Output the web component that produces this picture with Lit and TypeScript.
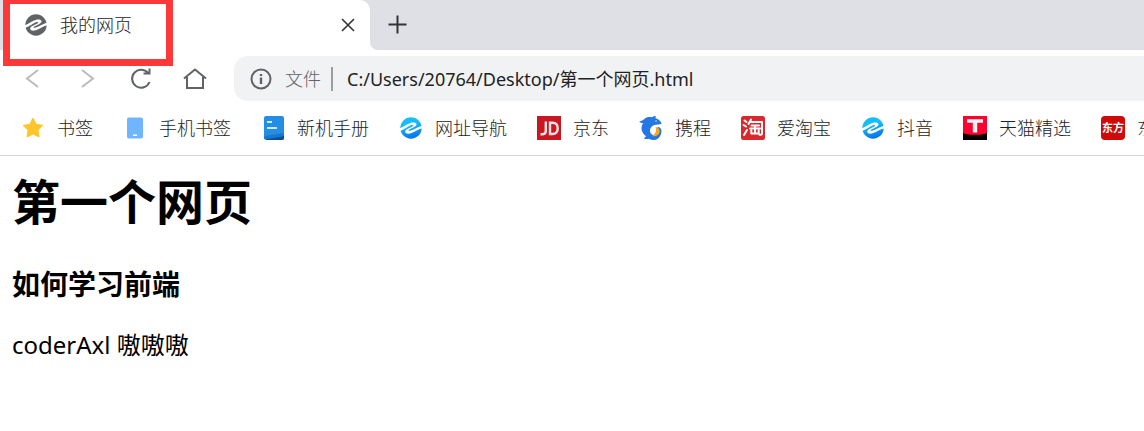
import { LitElement, html, css, svg } from "lit";
import { customElement, property, state } from "lit/decorators.js";

type IconName =
  | "star" | "phone" | "book" | "globe" | "jd" | "dolphin" | "tao" | "tmall" | "dongfang";

const swirl = (fill: string) => svg`
  <circle cx="12" cy="12" r="10.700" fill=${fill}/>
  <path fill="#fff" d="M0 12.400C3.800 11.700 7 8.300 11.500 7c3-.9 5.800-.4 6 1.300.1 1.200-.8 1.900-2.200 2.600l-5 2.500c-1.400.8-1.100 1.700.7 1.400 4-.7 7.500-4.400 13-5v2.400c-4.800.6-8 3.700-12.200 5-2.800.9-5.500.4-5.600-1.500-.1-1.300.8-2.100 2.200-2.800l5-2.500c1.400-.7 1-1.600-.7-1.300C8.700 9.900 6 14.200 0 14.900z"/>`;

const icons: Record<IconName, unknown> = {
  star: svg`<path fill="#ffc62b" stroke="#ffc62b" stroke-width="1.600" stroke-linejoin="round"
    d="M12 2.700l2.900 5.900 6.300.9-4.600 4.500 1.100 6.500-5.700-3-5.700 3 1.100-6.500L2.800 9.500l6.300-.9z"/>`,
  phone: svg`<rect x="4" y="1.500" width="16" height="21" rx="1.800" fill="#70b5ff"/>
    <rect x="10" y="18.500" width="4" height="1.500" fill="#fff"/>`,
  book: svg`<path fill="#0a4f98" d="M4 22l19-3v3.500q0 1.500-2 1.500H5z"/>
    <path fill="#248ee4" d="M5 0h16q2 0 2 2v16.500q0 1.500-2 1.700L3 23V2q0-2 2-2z"/>
    <path fill="#1778ce" d="M3 22q0-2 2-2.300L23 17v1.500q0 1.500-2 1.700L5 23.500q-2 0-2-1.500z"/>
    <path stroke="#c9eaff" stroke-width="2" d="M6 6h5M6 12h10"/>`,
  globe: svg`<defs><linearGradient id="sea" x1="0" y1="0" x2=".3" y2="1">
      <stop offset="0" stop-color="#13c4fa"/><stop offset=".45" stop-color="#16baf8"/><stop offset="1" stop-color="#0878ed"/>
    </linearGradient></defs>${swirl("url(#sea)")}`,
  jd: svg`<rect width="24" height="24" fill="#c91623"/>
    <path fill="none" stroke="#fbe3e4" stroke-width="2.400"
      d="M8.800 5.500v9.300q0 3.300-3 3.400H3.500M13 6.700h2.500c3.600 0 5.200 2.100 5.200 5.600s-1.600 5.700-5.200 5.700H13z"/>`,
  dolphin: svg`<path fill="#2577e3" d="M.3 5.300C3 5 4.300 3.800 6 2.500 8 1 10.500.8 13 1.300 14 .5 15.500 0 16.500 0c.5.600.2 1.300-.2 1.900 2.300.7 4.200 2 5.300 3.900.5.900 1 1.400 1 2-2.300 1.200-5 .5-7.300 1.300-2.700 1-4.300 3-4.300 5.400 0 3 2.300 4.900 5 4.800 2.300-.1 4-1.500 4.800-3.600l1.300.5C21.500 21 18.800 24 14.500 24c-1.700 0-3.300-.4-4.700-1.200-1.700.5-3.500.3-5.100-.6 1.300-.5 2-1.200 2.300-2.100C3.700 17.700 2 14 2.700 10.700 2.900 9.300 3.500 8.200 4.100 7.300 2.800 7.100 1 6.700.3 5.300z"/>
    <path fill="#f9a61d" d="M16.500 11.300c1.300 3 .5 6-3 8.600 4.200 1.100 7.300-1.600 7.300-5.600 0-2-2-3.500-4.300-3z"/>
    <path fill="#2577e3" d="M18 11c3-.3 4.800 1.800 4.500 5-.3 2.500-2 5-4.500 6.300 1.800-2.400 2.800-4.800 2.500-7.300-.1-1.700-1-3-2.500-4z"/>
    <circle cx="17" cy="5" r=".8" fill="#d7e9ff"/>`,
  tao: svg`<rect width="24" height="24" rx="2.500" fill="#d9282e"/>
    <path fill="none" stroke="#fff" stroke-width="2" stroke-linecap="round" stroke-linejoin="round"
      d="M3.500 4.500l2 1.500M2.500 9l2.500 1.500M3 19l3-5M10 3.500L7.500 8M9.500 6H21v11.500q0 1.500-2.500 1.300M10.500 9.500h7.500M9 12.500h10M14 9.500v8M10.300 14.500v3h7.400v-3"/>`,
  tmall: svg`<rect width="24" height="24" fill="#060002"/>
    <path fill="#ff0031" d="M0 0h24v16.500q-1.500 2-4 1.500-1.800.8-3 .8H7q-1.200 0-3-.8-2.500.5-4-1.500z"/>
    <path fill="#fff0f2" d="M4 3.300h16v3.500h-5.800v9.700H9.800V6.800H4z"/>`,
  dongfang: svg`<rect width="24" height="24" rx="4" fill="#d00a08"/>
    <text x="12" y="16" text-anchor="middle" class="glyph">东方</text>`,
};

@customElement("site-icon")
class SiteIcon extends LitElement {
  @property() name: IconName = "star";

  static styles = css`
    :host { display: block; flex: none; width: 24px; height: 24px; }
    .icon { display: block; width: 100%; height: 100%; }
    .glyph { font: 700 11px "Noto Sans CJK SC", sans-serif; fill: #fff; }
  `;

  render() {
    return html`<svg class="icon" viewBox="0 0 24 24" aria-hidden="true">${icons[this.name]}</svg>`;
  }
}

@customElement("browser-tabs")
class BrowserTabs extends LitElement {
  static styles = css`
    :host { display: block; background: #dfe0e6; padding-left: 3px; }
    .strip { display: flex; align-items: stretch; height: 50px; }
    .tab {
      display: flex; align-items: center; gap: 12px; box-sizing: border-box;
      flex: 0 1 367px; min-width: 0; padding: 0 12px 0 21px;
      background: #fff; border-radius: 0 10px 0 0;
    }
    .title { flex: 1; font-size: 18px; line-height: 24px; color: #222; }
    .mark { flex: none; width: 24px; height: 24px; }
    .action {
      display: grid; place-items: center; flex: none; padding: 0;
      border: 0; background: none; color: #333;
    }
    .close { width: 20px; height: 20px; }
    .rest { flex: 1; background: #fff; }
    .fill {
      display: flex; align-items: center; height: 100%; padding-left: 16px; box-sizing: border-box;
      background: #dfe0e6; border-radius: 0 0 0 8px;
    }
    .add { width: 24px; height: 24px; }
    .line { display: block; fill: none; stroke: currentColor; stroke-width: 2; }
    .thin { stroke-width: 1.6; }
  `;

  render() {
    return html`<div class="strip">
      <div class="tab">
        <svg class="mark" viewBox="0 0 24 24" aria-hidden="true">${swirl("#5f6368")}</svg>
        <span class="title">我的网页</span>
        <button class="action close" aria-label="关闭标签页">
          <svg class="line thin" width="14" height="14" viewBox="0 0 14 14"><path d="M1 1l12 12M13 1L1 13"/></svg>
        </button>
      </div>
      <div class="rest"><div class="fill">
        <button class="action add" aria-label="新建标签页">
          <svg class="line" width="20" height="20" viewBox="0 0 20 20"><path d="M9.500 .5v18M.5 9.500h18"/></svg>
        </button>
      </div></div>
    </div>`;
  }
}

@customElement("browser-toolbar")
class BrowserToolbar extends LitElement {
  @state() private address = "C:/Users/20764/Desktop/第一个网页.html";

  static styles = css`
    :host { display: flex; align-items: center; padding: 6px 0 0 21px; background: #fff; }
    .nav { display: flex; gap: 30px; margin-right: 27px; }
    .button {
      display: block; width: 24px; height: 24px; padding: 0; border: 0;
      background: none; color: #5f6368;
    }
    .button:disabled { color: #bbb; }
    .line { display: block; fill: none; stroke: currentColor; stroke-width: 2; }
    .omnibox {
      flex: 1; min-width: 0; display: flex; align-items: center; height: 45px;
      box-sizing: border-box; padding-left: 15px; background: #f1f2f4;
      border-radius: 14px 0 0 14px; font-size: 18px; line-height: 24px;
    }
    .scheme { margin-left: 12px; color: #5f6368; }
    .divider { width: 2px; height: 24px; margin: 0 14px 0 10px; background: #9c9da0; }
    .url {
      flex: 1; min-width: 0; padding: 0; border: 0; outline: 0; background: none;
      font: inherit; font-weight: 400; color: #222;
    }
  `;

  render() {
    return html`
      <nav class="nav">
        <button class="button" disabled aria-label="后退">
          <svg class="line" viewBox="0 0 24 24"><path d="M17 3L6 11.500 17 20"/></svg>
        </button>
        <button class="button" disabled aria-label="前进">
          <svg class="line" viewBox="0 0 24 24"><path d="M7 3l11 8.500L7 20"/></svg>
        </button>
        <button class="button" aria-label="刷新">
          <svg class="line" viewBox="0 0 24 24"><path d="M20.500 15A9 9 0 1 1 19.500 6.500M20.500 1.500V6.500h-6"/></svg>
        </button>
        <button class="button" aria-label="主页">
          <svg class="line" viewBox="0 0 24 24"><path d="M1 11.500L12 2.500l11 9M4 10v11h16V10"/></svg>
        </button>
      </nav>
      <div class="omnibox">
        <svg class="line" width="24" height="24" viewBox="0 0 24 24" color="#5f6368" aria-hidden="true">
          <circle cx="12" cy="12" r="9.500"/><path d="M12 7v2M12 10.500v6.500" stroke-width="2.400"/>
        </svg>
        <label class="scheme" for="url">文件</label>
        <span class="divider"></span>
        <input class="url" id="url" type="text" spellcheck="false" .value=${this.address} />
      </div>`;
  }
}

@customElement("bookmark-bar")
class BookmarkBar extends LitElement {
  private items: { label: string; icon: IconName }[] = [
    { label: "书签", icon: "star" },
    { label: "手机书签", icon: "phone" },
    { label: "新机手册", icon: "book" },
    { label: "网址导航", icon: "globe" },
    { label: "京东", icon: "jd" },
    { label: "携程", icon: "dolphin" },
    { label: "爱淘宝", icon: "tao" },
    { label: "抖音", icon: "globe" },
    { label: "天猫精选", icon: "tmall" },
    { label: "东方", icon: "dongfang" },
  ];

  static styles = css`
    :host { display: block; background: #fff; border-bottom: 1px solid #d5d5d5; }
    .bar { display: flex; gap: 30px; padding: 15px 0 15px 21px; overflow: hidden; }
    .link {
      flex: none; display: flex; align-items: center; gap: 12px;
      font-size: 18px; line-height: 24px; color: #222; text-decoration: none;
    }
  `;

  render() {
    return html`<nav class="bar">
      ${this.items.map((item) => html`<a class="link" href="#">
        <site-icon name=${item.icon}></site-icon><span>${item.label}</span>
      </a>`)}
    </nav>`;
  }
}

@customElement("app-root")
class AppRoot extends LitElement {
  static styles = css`
    :host {
      display: block; position: relative; overflow: hidden; background: #fff;
      font-family: "Noto Sans", "Noto Sans CJK SC", sans-serif; font-weight: 300;
    }
    .highlight {
      position: absolute; left: 3px; top: 0; width: 170px; height: 66px; box-sizing: border-box;
      border: 7px solid #fc3838; border-top-width: 4px; pointer-events: none;
    }
    .page { padding: 14px 12px; color: #000; }
    .heading { margin: 0; font-size: 48px; line-height: 64px; font-weight: 700; }
    .subheading { margin: 32px 0 0; font-size: 28px; line-height: 36px; font-weight: 700; }
    .text { margin: 25px 0 0; font-size: 24px; line-height: 36px; font-weight: 400; }
  `;

  render() {
    return html`
      <browser-tabs></browser-tabs>
      <browser-toolbar></browser-toolbar>
      <bookmark-bar></bookmark-bar>
      <main class="page">
        <h1 class="heading">第一个网页</h1>
        <h3 class="subheading">如何学习前端</h3>
        <p class="text">coderAxl 嗷嗷嗷</p>
      </main>
      <div class="highlight"></div>`;
  }
}
